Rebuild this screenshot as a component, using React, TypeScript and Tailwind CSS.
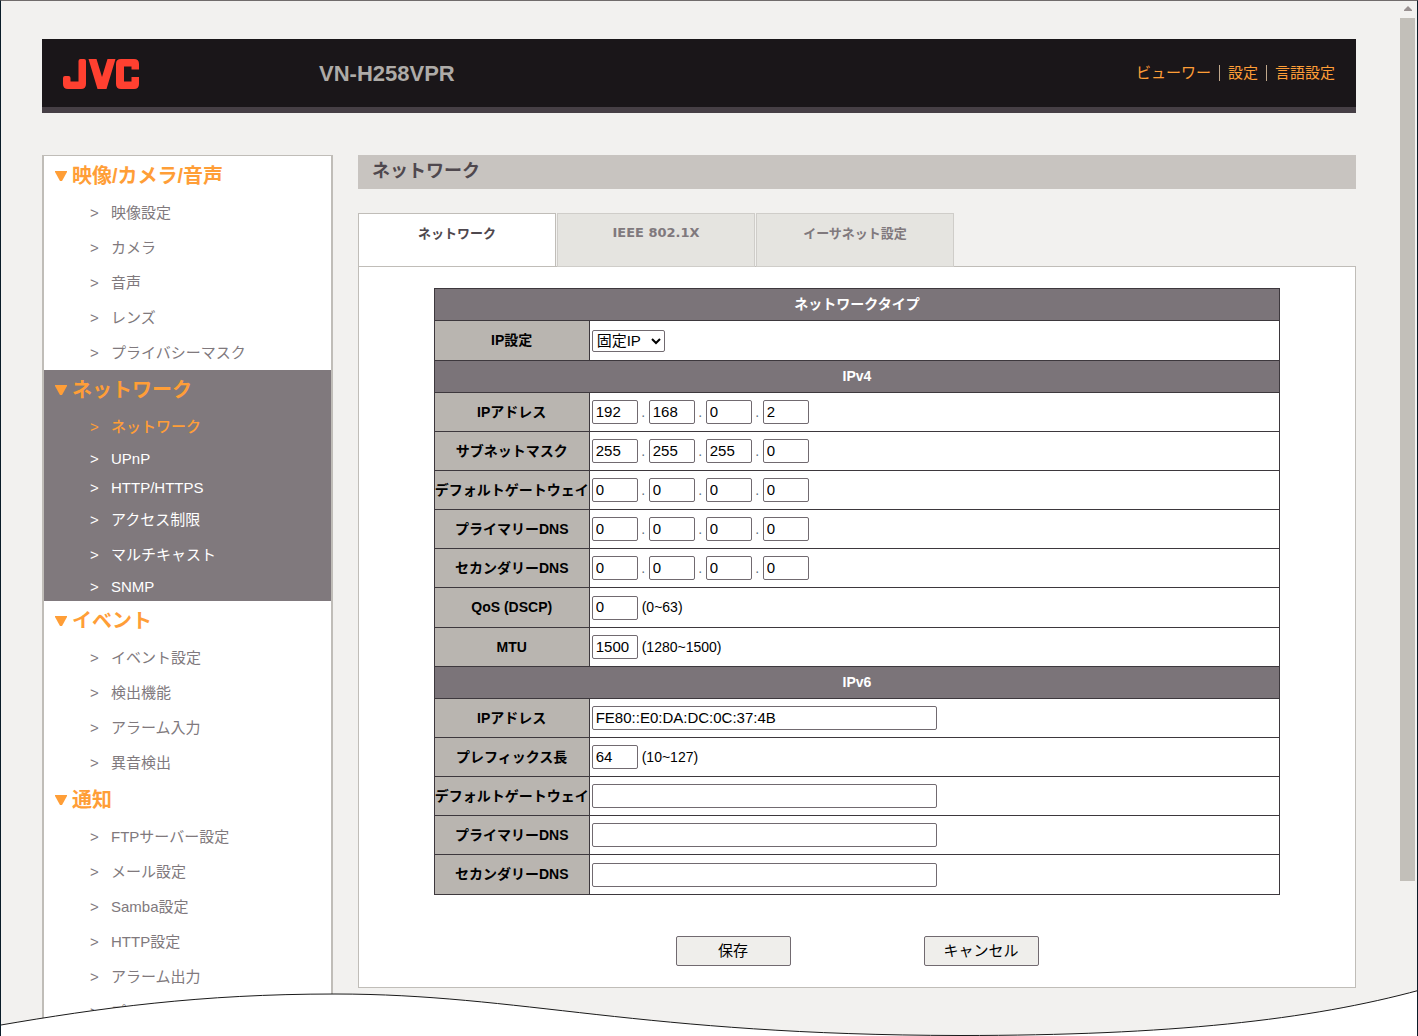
import React from 'react';

type Item = { label: string; latin?: boolean; active?: boolean };
type Section = { title: string; open?: boolean; items: Item[] };

const sections: Section[] = [
  {
    title: '映像/カメラ/音声',
    items: [
      { label: '映像設定' },
      { label: 'カメラ' },
      { label: '音声' },
      { label: 'レンズ' },
      { label: 'プライバシーマスク' },
    ],
  },
  {
    title: 'ネットワーク',
    open: true,
    items: [
      { label: 'ネットワーク', active: true },
      { label: 'UPnP', latin: true },
      { label: 'HTTP/HTTPS', latin: true },
      { label: 'アクセス制限' },
      { label: 'マルチキャスト' },
      { label: 'SNMP', latin: true },
    ],
  },
  {
    title: 'イベント',
    items: [
      { label: 'イベント設定' },
      { label: '検出機能' },
      { label: 'アラーム入力' },
      { label: '異音検出' },
    ],
  },
  {
    title: '通知',
    items: [
      { label: 'FTPサーバー設定' },
      { label: 'メール設定' },
      { label: 'Samba設定' },
      { label: 'HTTP設定' },
      { label: 'アラーム出力' },
      { label: 'プ' },
    ],
  },
];

function Logo() {
  return (
    <svg role="img" aria-label="JVC" viewBox="0 0 76 30" className="mt-px h-[30px] w-[76px]" fill="#ff4030">
      <path d="M15.5 2Q15.5 0 17.5 0H21Q23 0 23 2V25Q23 30 18 30H5Q0 30 0 25V19Q0 17 2 17H5.5Q7.5 17 7.5 19V22.5H15.5Z" />
      <path d="M25.5 0H33.5L39 18L44.5 0H52.5L43.5 30H34.5Z" />
      <path d="M58 0H71Q76 0 76 5V10.5H68.5V7.5H61V22.5H68.5V18H76V25Q76 30 71 30H58Q53 30 53 25V5Q53 0 58 0Z" />
    </svg>
  );
}

function Header() {
  return (
    <header className="flex h-[74px] items-center border-b-[6px] border-[#463f45] bg-[#1a1619] pr-[21px] pl-[21px]">
      <div className="w-[256px]">
        <Logo />
      </div>
      <h1 className="text-[22px] font-bold text-[#aeaba8]">VN-H258VPR</h1>
      <nav className="ml-auto flex items-center text-[15px] text-[#ff9e37]">
        <a href="#viewer">ビューワー</a>
        <span className="mx-2 h-4 w-px bg-[#c0a88c]" />
        <a href="#settings">設定</a>
        <span className="mx-2 h-4 w-px bg-[#c0a88c]" />
        <a href="#language">言語設定</a>
      </nav>
    </header>
  );
}

function MenuSection({ section }: { section: Section }) {
  return (
    <section className={section.open ? 'bg-[#80797d] text-white' : 'text-[#80797d]'}>
      <h2 className="flex h-[39px] items-center gap-[5px] pl-[11px] text-[20px] font-bold text-[#ff9e37]">
        <svg viewBox="0 0 12 10" className="mt-px h-[10px] w-3" fill="currentColor" aria-hidden="true">
          <path d="M0 0H12V1L7 10H5L0 1Z" />
        </svg>
        {section.title}
      </h2>
      <ul>
        {section.items.map((item) => (
          <li key={item.label} className={item.latin ? 'h-[29px] leading-[29px]' : 'h-[35px] leading-[35px]'}>
            <a
              href="#menu"
              aria-current={item.active ? 'page' : undefined}
              className={`flex pl-[46px] text-[15px] ${item.active ? 'font-medium text-[#ff9e37]' : ''}`}
            >
              <span className="w-[21px]">&gt;</span>
              {item.label}
            </a>
          </li>
        ))}
      </ul>
    </section>
  );
}

const fieldClass = 'h-6 rounded-[2px] border border-[#716a70] bg-white px-[3px] pb-[2px] text-[15px] text-black';

function HeadRow({ children }: { children: React.ReactNode }) {
  return (
    <tr className="h-8 bg-[#7b7479] text-white">
      <th colSpan={2} scope="colgroup" className="border border-[#3d383d] p-0 font-bold">
        {children}
      </th>
    </tr>
  );
}

function Row({ label, htmlFor, tall, children }: { label: string; htmlFor: string; tall?: boolean; children: React.ReactNode }) {
  return (
    <tr className={tall ? 'h-10' : 'h-[39px]'}>
      <th scope="row" className="w-[155px] border border-[#3d383d] bg-[#b9b5b0] p-0 font-bold whitespace-nowrap">
        <label htmlFor={htmlFor}>{label}</label>
      </th>
      <td className="border border-[#3d383d] px-[2px] py-0">
        <div className="flex items-center">{children}</div>
      </td>
    </tr>
  );
}

function Octets({ id, label, values }: { id: string; label: string; values: string[] }) {
  return (
    <>
      {values.map((value, i) => (
        <React.Fragment key={i}>
          {i > 0 && <span className="w-[11px] text-center text-[#5d7080]">.</span>}
          <input
            id={i === 0 ? id : undefined}
            aria-label={`${label} ${i + 1}`}
            defaultValue={value}
            className={`${fieldClass} w-[46px]`}
          />
        </React.Fragment>
      ))}
    </>
  );
}

function NumberField({ id, value, range }: { id: string; value: string; range: string }) {
  return (
    <>
      <input id={id} defaultValue={value} className={`${fieldClass} mr-1 w-[46px]`} />
      {range}
    </>
  );
}

const ipv4Rows = [
  { id: 'v4-address', label: 'IPアドレス', values: ['192', '168', '0', '2'] },
  { id: 'v4-mask', label: 'サブネットマスク', values: ['255', '255', '255', '0'] },
  { id: 'v4-gateway', label: 'デフォルトゲートウェイ', values: ['0', '0', '0', '0'] },
  { id: 'v4-dns1', label: 'プライマリーDNS', values: ['0', '0', '0', '0'] },
  { id: 'v4-dns2', label: 'セカンダリーDNS', values: ['0', '0', '0', '0'] },
];

function SettingsTable() {
  return (
    <table className="mx-auto w-[85%] table-fixed border-collapse text-[14px] text-black">
      <colgroup>
        <col className="w-[155px]" />
        <col />
      </colgroup>
      <tbody>
        <HeadRow>ネットワークタイプ</HeadRow>
        <Row label="IP設定" htmlFor="ip-mode" tall>
          <select id="ip-mode" className="h-[22px] w-[73px] rounded-[2px] border border-[#716a70] bg-white text-[15px]">
            <option>固定IP</option>
          </select>
        </Row>
        <HeadRow>IPv4</HeadRow>
        {ipv4Rows.map((row) => (
          <Row key={row.id} label={row.label} htmlFor={row.id}>
            <Octets {...row} />
          </Row>
        ))}
        <Row label="QoS (DSCP)" htmlFor="qos" tall>
          <NumberField id="qos" value="0" range="(0~63)" />
        </Row>
        <Row label="MTU" htmlFor="mtu">
          <NumberField id="mtu" value="1500" range="(1280~1500)" />
        </Row>
        <HeadRow>IPv6</HeadRow>
        <Row label="IPアドレス" htmlFor="v6-address">
          <input id="v6-address" defaultValue="FE80::E0:DA:DC:0C:37:4B" className={`${fieldClass} w-[345px]`} />
        </Row>
        <Row label="プレフィックス長" htmlFor="v6-prefix">
          <NumberField id="v6-prefix" value="64" range="(10~127)" />
        </Row>
        <Row label="デフォルトゲートウェイ" htmlFor="v6-gateway">
          <input id="v6-gateway" className={`${fieldClass} w-[345px]`} />
        </Row>
        <Row label="プライマリーDNS" htmlFor="v6-dns1">
          <input id="v6-dns1" className={`${fieldClass} w-[345px]`} />
        </Row>
        <Row label="セカンダリーDNS" htmlFor="v6-dns2" tall>
          <input id="v6-dns2" className={`${fieldClass} w-[345px]`} />
        </Row>
      </tbody>
    </table>
  );
}

function Tabs() {
  const base = "h-[54px] w-[198px] border pb-[14px] font-['DejaVu_Sans','Noto_Sans_CJK_JP',sans-serif] text-[13px] font-bold";
  const japanese = "h-[54px] w-[198px] border pb-[14px] font-['Noto_Sans_CJK_JP',sans-serif] text-[13px] font-bold";
  return (
    <div role="tablist" className="-mb-px flex gap-px">
      <button role="tab" aria-selected="true" className={`${japanese} border-[#c0bdb8] bg-white text-[#4f484e]`}>
        ネットワーク
      </button>
      <button role="tab" aria-selected="false" className={`${base} border-[#cfcdc9] bg-[#e5e4e0] text-[#80797d]`}>
        IEEE 802.1X
      </button>
      <button role="tab" aria-selected="false" className={`${japanese} border-[#cfcdc9] bg-[#e5e4e0] text-[#80797d]`}>
        イーサネット設定
      </button>
    </div>
  );
}

function Scrollbar() {
  return (
    <div aria-hidden="true" className="flex w-[17px] flex-col items-center pr-[2px]">
      <svg viewBox="0 0 8 5" className="mt-[5px] mb-[7px] h-[5px] w-2" fill="#989090">
        <path d="M0 5V4L4 0L8 4V5Z" />
      </svg>
      <div className="mb-[155px] w-full flex-1 bg-[#c2bfb9]" />
    </div>
  );
}

function TornEdge() {
  return (
    <svg
      aria-hidden="true"
      viewBox="0 0 1418 46"
      preserveAspectRatio="none"
      className="pointer-events-none absolute -inset-x-px bottom-0 h-[46px] w-[calc(100%+2px)]"
    >
      <path d="M-2 35.5C100 18 200 4 335 4C520 4 640 45 960 45.5C1170 45.5 1310 30 1420 0V48H-2Z" fill="#fff" stroke="#1a1a1a" />
    </svg>
  );
}

export default function App() {
  return (
    <div className="relative flex min-h-screen overflow-hidden border-x border-t border-x-[#0a1c28] border-t-[#716c6c] bg-[#f2f1ef] font-['Liberation_Sans','Noto_Sans_CJK_JP',sans-serif]">
      <div className="flex flex-1 flex-col pt-[38px] pr-11 pl-[41px]">
        <Header />
        <div className="mt-[42px] flex flex-1 gap-[25px]">
          <aside className="w-[291px] shrink-0 border-x-2 border-t border-[#c0bdb8] bg-white">
            {sections.map((section) => (
              <MenuSection key={section.title} section={section} />
            ))}
          </aside>
          <main className="min-w-0 flex-1">
            <h2 className="h-[34px] bg-[#c8c4c0] pl-[14px] text-[18px] leading-8 font-bold text-[#4f484e]">ネットワーク</h2>
            <div className="mt-6">
              <Tabs />
              <div className="border border-[#c0bdb8] bg-white pt-[21px] pb-[21px]">
                <SettingsTable />
                <div className="mt-[41px] flex justify-center gap-[133px]">
                  <button className="h-[30px] w-[115px] rounded-[2px] border border-[#716a70] bg-[#efeeeb] text-[15px] text-black">
                    保存
                  </button>
                  <button className="h-[30px] w-[115px] rounded-[2px] border border-[#716a70] bg-[#efeeeb] text-[15px] text-black">
                    キャンセル
                  </button>
                </div>
              </div>
            </div>
          </main>
        </div>
      </div>
      <Scrollbar />
      <TornEdge />
    </div>
  );
}
